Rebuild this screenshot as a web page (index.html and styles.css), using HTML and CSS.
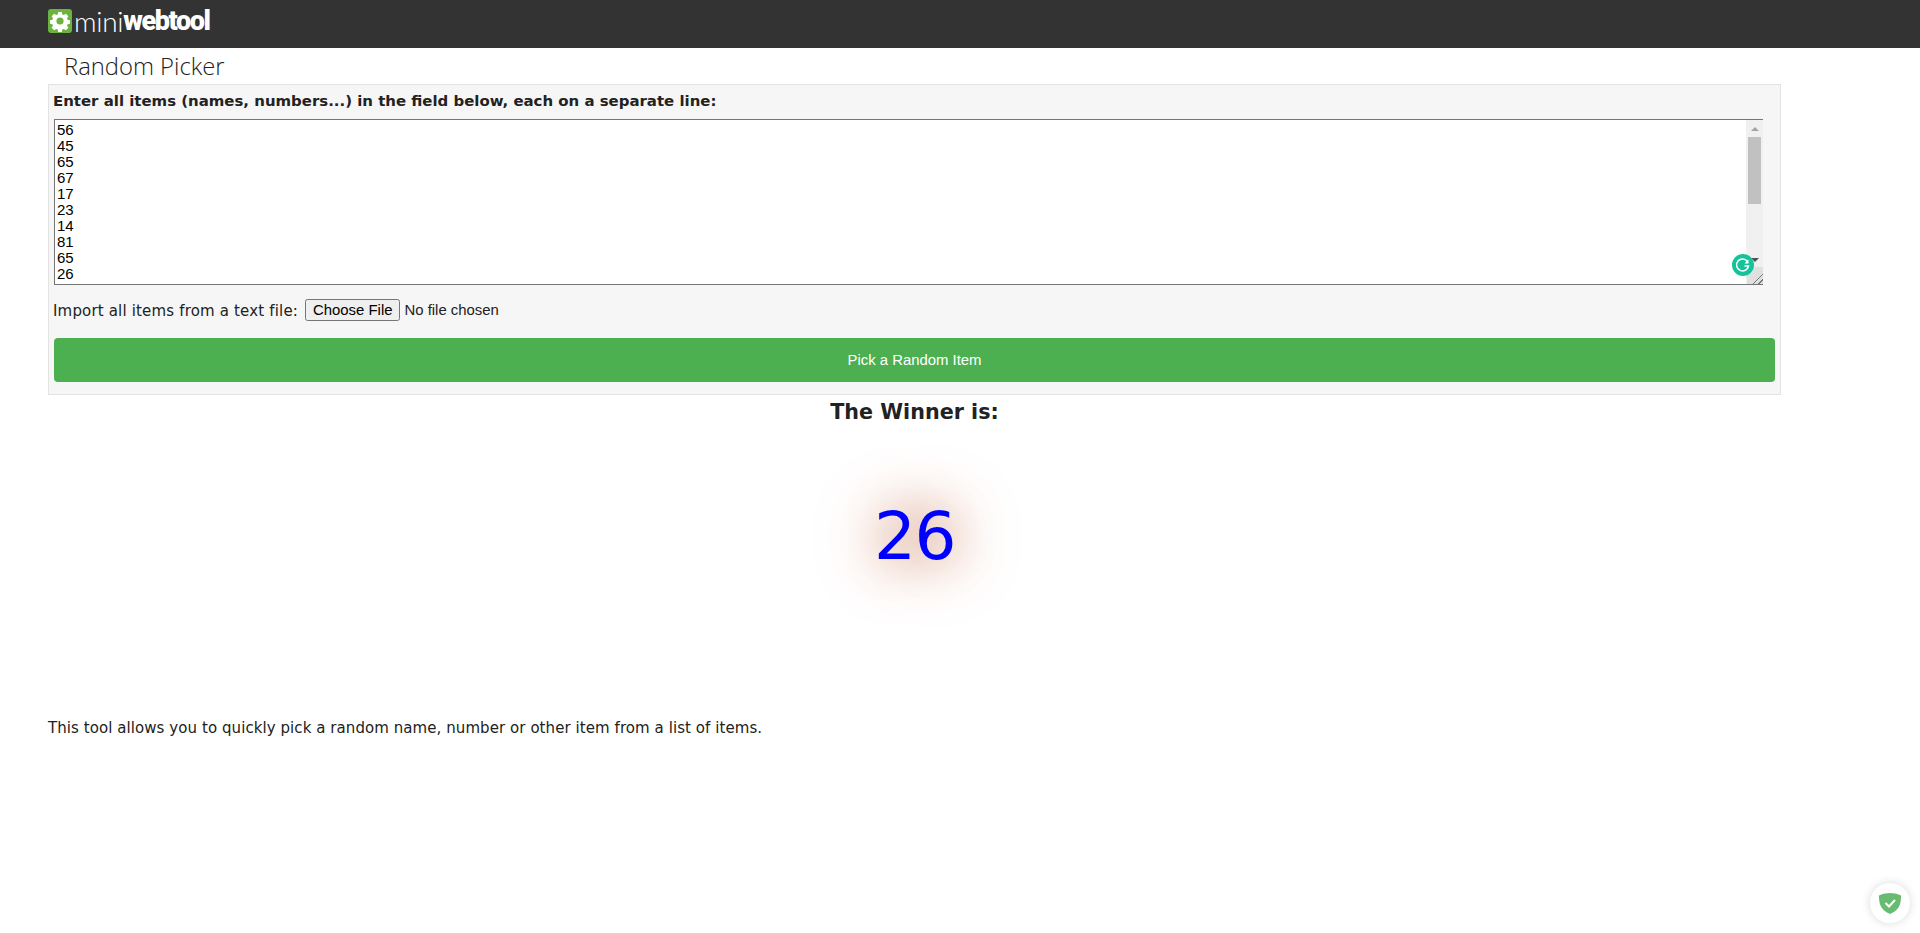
FILE: index.html
```html
<!DOCTYPE html>
<html lang="en">
<head>
    <meta charset="UTF-8">
    <title>Random Picker</title>
    <link rel="stylesheet" href="styles.css">
</head>
<body>

    <header class="topbar">
        <a class="logo" href="#">
            <svg class="logo-icon" width="24" height="24" viewBox="0 0 24 24">
                <rect width="24" height="24" rx="3" fill="#6cb33f"/>
                <path fill="#fff" fill-rule="evenodd" d="M10.2 3h3.6l.5 2.5 1.5.6 2.1-1.4 2.500 2.500-1.400 2.100.6 1.500 2.400.5v3.400l-2.400.5-.6 1.500 1.400 2.100-2.500 2.500-2.100-1.400-1.500.6-.5 2.500h-3.600l-.5-2.500-1.500-.6-2.100 1.400-2.500-2.500 1.400-2.100-.6-1.500-2.400-.5v-3.400l2.400-.5.6-1.500-1.400-2.100 2.500-2.500 2.100 1.400 1.500-.6zM12 8.400a3.600 3.600 0 1 0 0 7.200 3.600 3.600 0 0 0 0-7.200z"/>
            </svg>
            <span class="logo-mini">mini</span><span class="logo-web">webtool</span>
        </a>
    </header>

    <main class="content">
        <h1 class="page-title">Random Picker</h1>

        <form class="picker-box">
            <label class="picker-label" for="items">Enter all items (names, numbers...) in the field below, each on a separate line:</label>
            <div class="items-wrap">
                <textarea id="items" class="items" spellcheck="false">56
45
65
67
17
23
14
81
65
26</textarea>
                <div class="fake-scroll">
                    <span class="arrow-up"></span>
                    <span class="thumb"></span>
                    <span class="arrow-down"></span>
                    <span class="resizer"></span>
                </div>
                <svg class="grammarly" width="22" height="22" viewBox="0 0 22 22">
                    <circle cx="11" cy="11" r="11" fill="#15c39a"/>
                    <path fill="none" stroke="#fff" stroke-width="1.500" d="M15.500 7.500a6 6 0 1 0 1 4.500h-4"/>
                    <path fill="#fff" d="M16.500 5.500v4h-4z"/>
                </svg>
            </div>
            <div class="import-row">
                <span class="import-label">Import all items from a text file:</span>
                <input type="file" class="file-input">
            </div>
            <button type="button" class="pick-button">Pick a Random Item</button>
        </form>

        <div class="result">
            <h2 class="result-title">The Winner is:</h2>
            <div class="winner">26</div>
        </div>

        <p class="about">This tool allows you to quickly pick a random name, number or other item from a list of items.</p>
    </main>

    <div class="adguard">
        <svg width="22" height="21" viewBox="0 0 22 21">
            <path fill="#68bc71" d="M11 0C8 0 4 .7 0 2.500 0 9.500.5 16.500 11 21c10.500-4.500 11-11.500 11-18.500C18 .7 14 0 11 0z"/>
            <path fill="none" stroke="#fff" stroke-width="2" d="M6.500 10l3.500 3.500 6-6.500"/>
        </svg>
    </div>

</body>
</html>
```

FILE: styles.css
```css
body {
    font-family: "DejaVu Sans", Verdana, sans-serif;
    color: #222;
    background-color: #fff;
    margin: 0;
}
.topbar {
    height: 48px;
    background-color: #333;
    padding-left: 48px;
}
.logo {
    display: flex;
    align-items: center;
    height: 38px;
    padding-top: 2px;
    color: #fff;
    text-decoration: none;
}
.logo-icon {
    margin-right: 2px;
}
.logo-mini {
    font-family: "Lato", sans-serif;
    font-weight: 300;
    font-size: 28px;
    letter-spacing: -0.3px;
}
.logo-web {
    font-family: "Roboto", sans-serif;
    font-weight: 900;
    font-size: 27px;
    letter-spacing: -1.4px;
}
.content {
    width: 1733px;
    margin-left: 48px;
}
.page-title {
    font-family: "Open Sans", sans-serif;
    font-weight: 300;
    font-size: 23.800px;
    line-height: 35px;
    color: #222;
    margin: 0;
    padding: 1px 0 0 16px;
}
.picker-box {
    background-color: #f6f6f6;
    border: 1px solid #e3e3e3;
    box-sizing: border-box;
    height: 311px;
    padding: 6px 4px;
}
.picker-label {
    display: block;
    font-size: 14.950px;
    font-weight: 700;
    line-height: 20px;
    margin-bottom: 8px;
}
.items-wrap {
    position: relative;
    width: 1709px;
    height: 166px;
    margin-left: 1px;
}
.items {
    display: block;
    width: 100%;
    height: 100%;
    box-sizing: border-box;
    border: 1px solid #767676;
    border-width: 1px 0 1px 1px;
    padding: 2px;
    margin: 0;
    font-family: "Liberation Sans", Arial, sans-serif;
    font-size: 15px;
    line-height: 16px;
    color: #000;
    overflow: hidden;
    resize: none;
    outline: none;
}
.fake-scroll {
    position: absolute;
    top: 1px;
    right: 0;
    bottom: 1px;
    width: 17px;
    background-color: #f0f0f0;
}
.arrow-up, .arrow-down {
    position: absolute;
    right: 4px;
    width: 0;
    height: 0;
    border-left: 4px solid transparent;
    border-right: 4px solid transparent;
}
.arrow-up {
    top: 7px;
    border-bottom: 4px solid #a3a3a3;
}
.arrow-down {
    bottom: 22px;
    border-top: 4px solid #505050;
}
.thumb {
    position: absolute;
    top: 17px;
    left: 2px;
    width: 13px;
    height: 67px;
    background-color: #c1c1c1;
}
.resizer {
    position: absolute;
    right: 0;
    bottom: 0;
    width: 16px;
    height: 17px;
    background-color: #e0e0e0;
    background-image: linear-gradient(135deg, transparent 68%, #777 68%, #777 72%, transparent 72%, transparent 84%, #777 84%, #777 88%, transparent 88%);
}
.grammarly {
    position: absolute;
    right: 9px;
    bottom: 9px;
}
.import-row {
    display: flex;
    align-items: center;
    height: 22px;
    margin-top: 14px;
    gap: 7px;
}
.import-label {
    padding-top: 2px;
    font-size: 15px;
    letter-spacing: 0.17px;
}
.file-input {
    font-family: "Liberation Sans", Arial, sans-serif;
    font-size: 14.900px;
}
.pick-button {
    display: block;
    width: 1721px;
    height: 44px;
    margin: 17px 0 0 1px;
    padding: 0;
    background-color: #4caf50;
    color: #fff;
    border: none;
    border-radius: 4px;
    font-family: "Liberation Sans", Arial, sans-serif;
    font-size: 14.900px;
}
.result {
    text-align: center;
}
.result-title {
    font-size: 20.700px;
    font-weight: 700;
    line-height: 32px;
    margin: 0;
    padding-top: 1px;
}
.winner {
    font-size: 66px;
    line-height: 78px;
    letter-spacing: -1.500px;
    color: #00f;
    margin-top: 70px;
    height: 220px;
    text-shadow: 0 0 50px #b9603c, 0 0 80px #d9a080;
}
.about {
    font-size: 15px;
    letter-spacing: 0.07px;
    line-height: 20px;
    margin: 0;
}
.adguard {
    position: fixed;
    right: 10px;
    bottom: 10px;
    width: 40px;
    height: 40px;
    border-radius: 50%;
    background-color: #fff;
    box-shadow: 0 0 10px rgba(0, 0, 0, 0.15);
    display: flex;
    align-items: center;
    justify-content: center;
}
```
